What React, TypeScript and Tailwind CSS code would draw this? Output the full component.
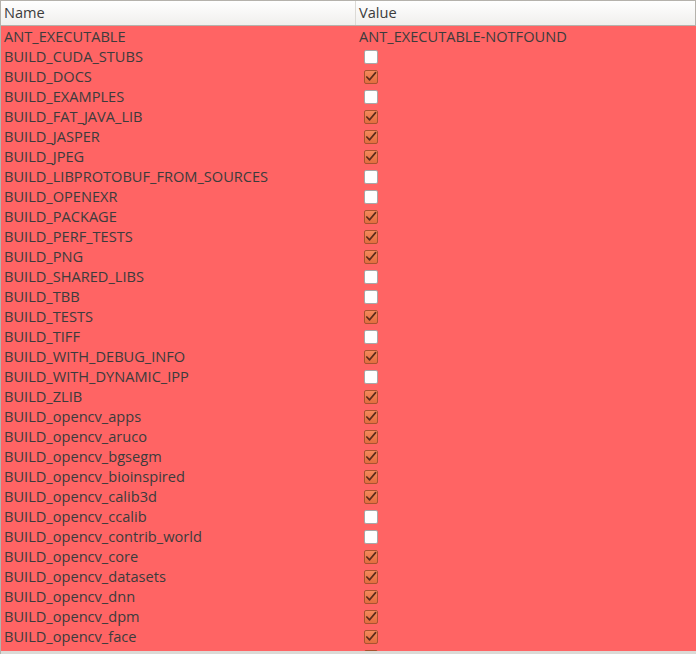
const rows: [string, boolean | string][] = [
  ['ANT_EXECUTABLE', 'ANT_EXECUTABLE-NOTFOUND'],
  ['BUILD_CUDA_STUBS', false],
  ['BUILD_DOCS', true],
  ['BUILD_EXAMPLES', false],
  ['BUILD_FAT_JAVA_LIB', true],
  ['BUILD_JASPER', true],
  ['BUILD_JPEG', true],
  ['BUILD_LIBPROTOBUF_FROM_SOURCES', false],
  ['BUILD_OPENEXR', false],
  ['BUILD_PACKAGE', true],
  ['BUILD_PERF_TESTS', true],
  ['BUILD_PNG', true],
  ['BUILD_SHARED_LIBS', false],
  ['BUILD_TBB', false],
  ['BUILD_TESTS', true],
  ['BUILD_TIFF', false],
  ['BUILD_WITH_DEBUG_INFO', true],
  ['BUILD_WITH_DYNAMIC_IPP', false],
  ['BUILD_ZLIB', true],
  ['BUILD_opencv_apps', true],
  ['BUILD_opencv_aruco', true],
  ['BUILD_opencv_bgsegm', true],
  ['BUILD_opencv_bioinspired', true],
  ['BUILD_opencv_calib3d', true],
  ['BUILD_opencv_ccalib', false],
  ['BUILD_opencv_contrib_world', false],
  ['BUILD_opencv_core', true],
  ['BUILD_opencv_datasets', true],
  ['BUILD_opencv_dnn', true],
  ['BUILD_opencv_dpm', true],
  ['BUILD_opencv_face', true],
  ['BUILD_opencv_features2d', true],
];

function Check({ on }: { on: boolean }) {
  if (!on) {
    return <span className="block w-[14px] h-[14px] rounded-[2px] border border-[#a7a7a7] bg-white" />;
  }
  return (
    <span className="flex items-center justify-center w-[14px] h-[14px] rounded-[2px] border border-[#a8532f] bg-gradient-to-b from-[#f48a5c] to-[#e46c3f]">
      <svg width="12" height="12" viewBox="0 0 12 12">
        <path d="M1.8 6 L4.6 8.8 L10.6 1.6" fill="none" stroke="#5b2b1c" strokeWidth="1.7" strokeLinecap="round" strokeLinejoin="round" />
      </svg>
    </span>
  );
}

export default function App() {
  return (
    <div
      className="h-[654px] w-[696px] overflow-hidden bg-[#ff6464] border-l border-t border-[#b5b2ac] text-[#3c3c3c] text-[14.6px] flex flex-col"
      style={{ fontFamily: '"Open Sans", "DejaVu Sans", sans-serif' }}
    >
      <div className="flex h-[25px] shrink-0 bg-gradient-to-b from-white to-[#f0efed] border-b border-[#b5b2ac]">
        <div className="w-[355px] border-r border-[#dcdad6] pl-[3px] flex items-center">Name</div>
        <div className="flex-1 pl-[3px] flex items-center border-r border-[#b5b2ac]">Value</div>
      </div>
      <div className="flex-1 overflow-hidden">
        {rows.map(([name, val]) => (
          <div key={name} className="flex h-[20px] items-center">
            <div className="w-[355px] pl-[3px] pt-[2px] whitespace-nowrap">{name}</div>
            <div className="flex-1 pl-[3px] flex items-center">
              {typeof val === 'string' ? (
                <span className="pt-[2px]">{val}</span>
              ) : (
                <span className="ml-[5px] pt-[1px]">
                  <Check on={val} />
                </span>
              )}
            </div>
          </div>
        ))}
      </div>
      <div className="h-[3px] shrink-0 bg-[#dcdad6]" />
    </div>
  );
}
